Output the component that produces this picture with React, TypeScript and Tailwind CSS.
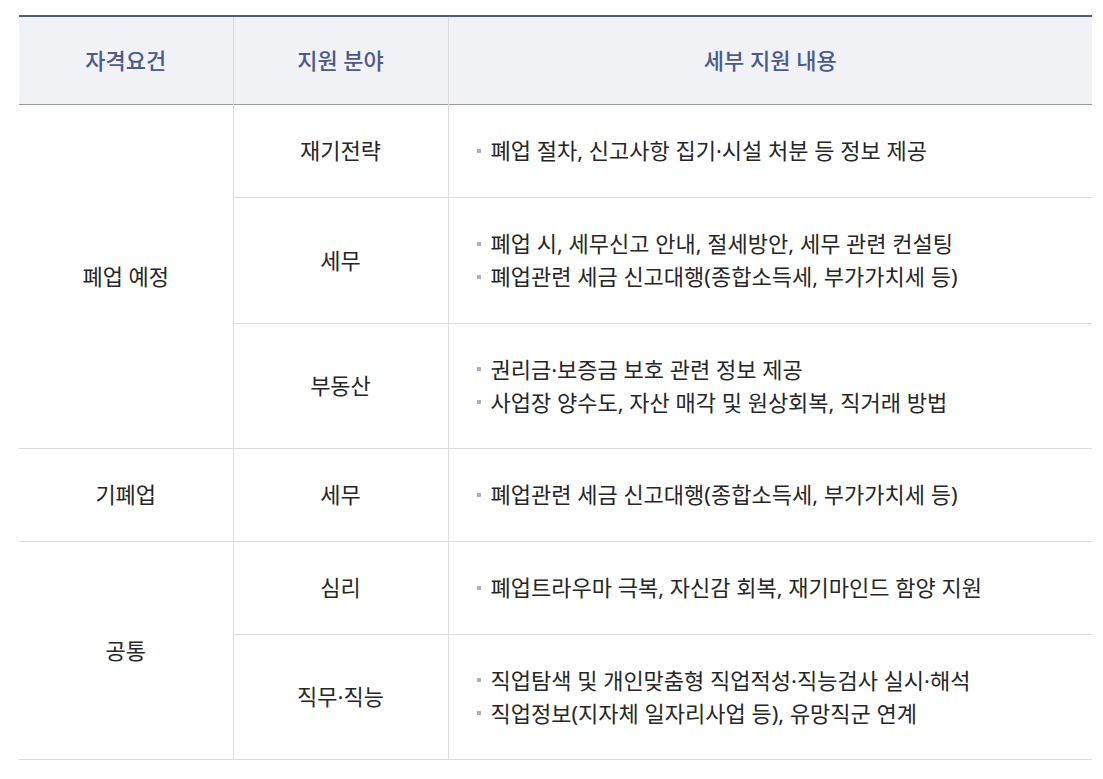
import React from 'react'

type Row = {
  group?: { label: string; span: number }
  field: string
  items: string[]
  h: string
}

const rows: Row[] = [
  { group: { label: '폐업 예정', span: 3 }, field: '재기전략', items: ['폐업 절차, 신고사항 집기·시설 처분 등 정보 제공'], h: 'h-[93px]' },
  { field: '세무', items: ['폐업 시, 세무신고 안내, 절세방안, 세무 관련 컨설팅', '폐업관련 세금 신고대행(종합소득세, 부가가치세 등)'], h: 'h-[126px]' },
  { field: '부동산', items: ['권리금·보증금 보호 관련 정보 제공', '사업장 양수도, 자산 매각 및 원상회복, 직거래 방법'], h: 'h-[125px]' },
  { group: { label: '기폐업', span: 1 }, field: '세무', items: ['폐업관련 세금 신고대행(종합소득세, 부가가치세 등)'], h: 'h-[93px]' },
  { group: { label: '공통', span: 2 }, field: '심리', items: ['폐업트라우마 극복, 자신감 회복, 재기마인드 함양 지원'], h: 'h-[93px]' },
  { field: '직무·직능', items: ['직업탐색 및 개인맞춤형 직업적성·직능검사 실시·해석', '직업정보(지자체 일자리사업 등), 유망직군 연계'], h: 'h-[125px]' },
]

export default function App() {
  return (
    <div className="min-h-screen bg-white pt-[15px] pl-[19px] font-['Noto_Sans','Noto_Sans_CJK_KR',sans-serif]">
      <table className="w-[1073px] table-fixed border-collapse border-t-2 border-t-[#525a7a] text-[22px] text-[#262626]">
        <colgroup>
          <col className="w-[214px]" />
          <col className="w-[215px]" />
          <col />
        </colgroup>
        <thead>
          <tr className="h-[88px] bg-[#f0f2f6] border-b border-b-[#9a9a9a]">
            <th className="font-medium text-[#4b5a8a] text-center">자격요건</th>
            <th className="font-medium text-[#4b5a8a] text-center border-l border-l-[#dcdcdc]">지원 분야</th>
            <th className="font-medium text-[#4b5a8a] text-center border-l border-l-[#dcdcdc]">세부 지원 내용</th>
          </tr>
        </thead>
        <tbody>
          {rows.map((r, i) => (
            <tr key={i} className={`${r.h} border-b border-b-[#dcdcdc]`}>
              {r.group && (
                <td rowSpan={r.group.span} className="text-center align-middle">
                  {r.group.label}
                </td>
              )}
              <td className="text-center align-middle border-l border-l-[#dcdcdc]">{r.field}</td>
              <td className="align-middle border-l border-l-[#dcdcdc] pl-[28px]">
                <ul className="leading-[33px]">
                  {r.items.map((t) => (
                    <li key={t} className="flex items-center">
                      <span className="w-[4px] h-[4px] bg-[#a8b0c8] mr-[10px] shrink-0" />
                      {t}
                    </li>
                  ))}
                </ul>
              </td>
            </tr>
          ))}
        </tbody>
      </table>
    </div>
  )
}
